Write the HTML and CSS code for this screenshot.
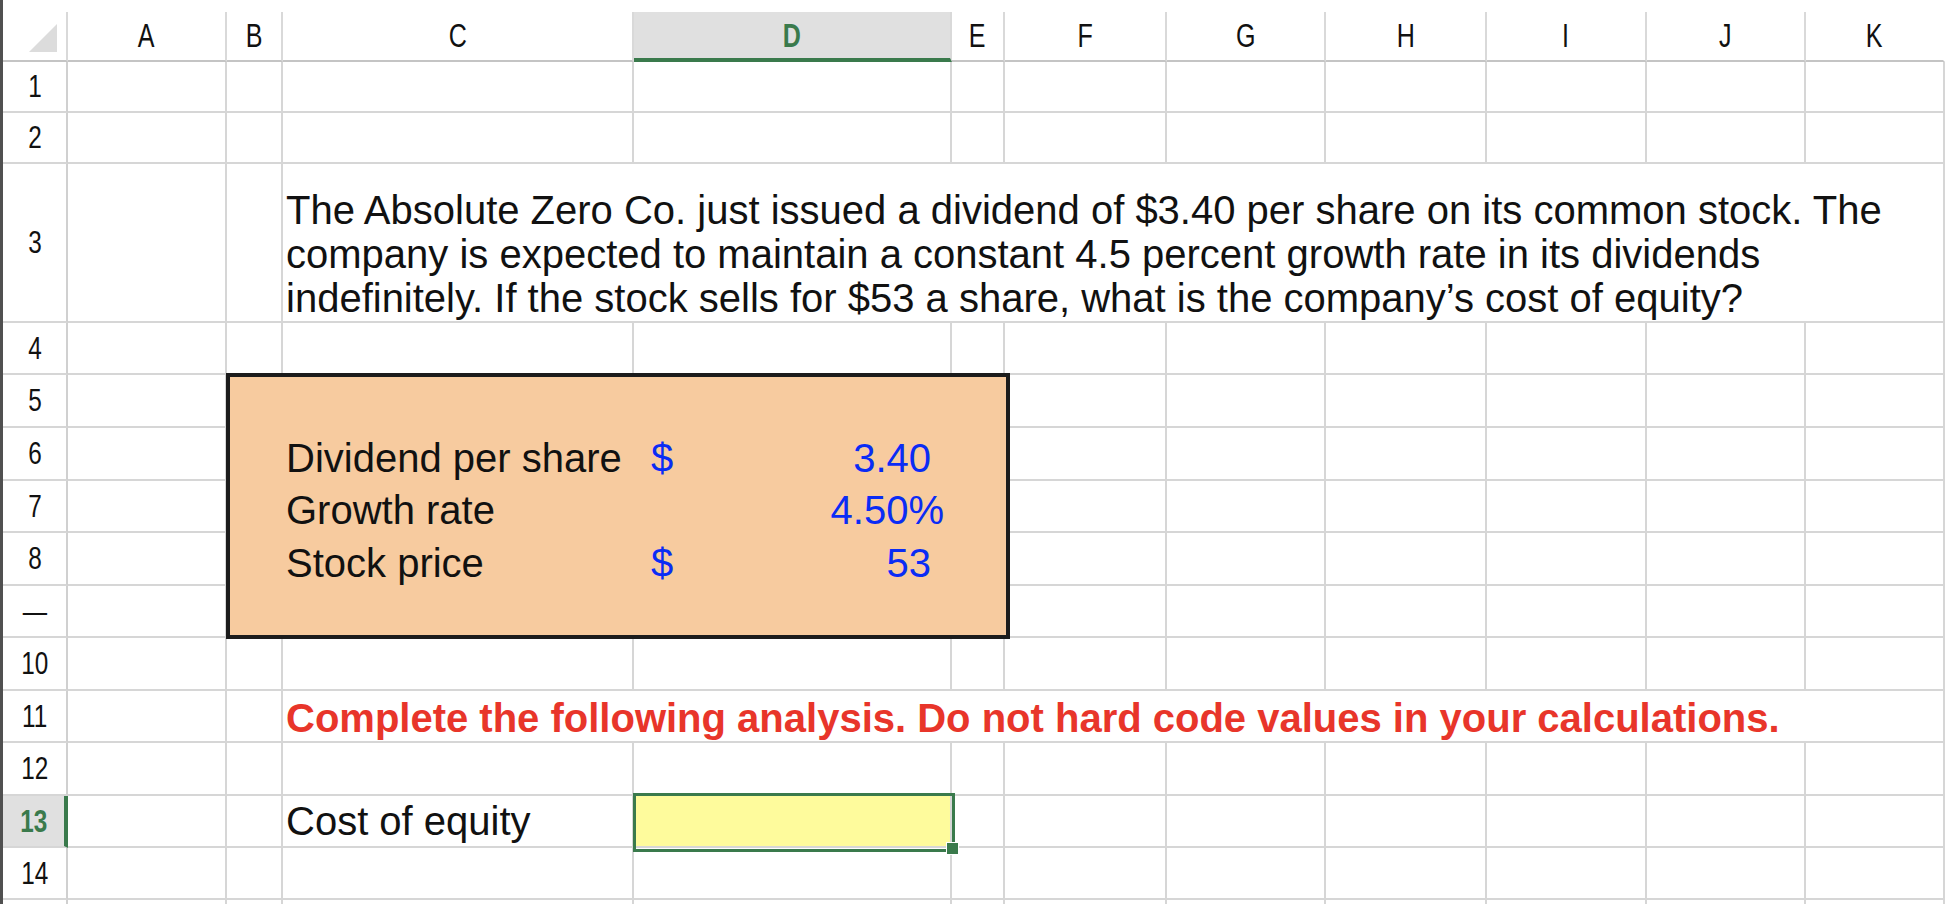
FILE: index.html
```html
<!DOCTYPE html>
<html lang="en">
<head>
<meta charset="utf-8">
<title>Cost of equity</title>
<link rel="stylesheet" href="styles.css">
</head>
<body>
<div class="app">
  <div class="edge"></div>
  <div class="sheet">
    <!-- header row -->
    <div class="h corner"><svg width="28" height="28" viewBox="0 0 28 28"><polygon points="28,0 28,28 0,28" fill="#dcdcdc"/></svg></div>
    <div class="h"><span>A</span></div>
    <div class="h"><span>B</span></div>
    <div class="h"><span>C</span></div>
    <div class="h act"><span>D</span></div>
    <div class="h"><span>E</span></div>
    <div class="h"><span>F</span></div>
    <div class="h"><span>G</span></div>
    <div class="h"><span>H</span></div>
    <div class="h"><span>I</span></div>
    <div class="h"><span>J</span></div>
    <div class="h k"><span>K</span></div>

    <!-- row 1 -->
    <div class="r"><span>1</span></div>
    <div class="c"></div><div class="c"></div><div class="c"></div><div class="c"></div><div class="c"></div><div class="c"></div><div class="c"></div><div class="c"></div><div class="c"></div><div class="c"></div><div class="c"></div>

    <!-- row 2 -->
    <div class="r"><span>2</span></div>
    <div class="c"></div><div class="c"></div><div class="c"></div><div class="c"></div><div class="c"></div><div class="c"></div><div class="c"></div><div class="c"></div><div class="c"></div><div class="c"></div><div class="c"></div>

    <!-- row 3 -->
    <div class="r"><span>3</span></div>
    <div class="c"></div><div class="c"></div>
    <div class="c t wide para">The Absolute Zero Co. just issued a dividend of $3.40 per share on its common stock. The<br>company is expected to maintain a constant 4.5 percent growth rate in its dividends<br>indefinitely. If the stock sells for $53 a share, what is the company’s cost of equity?</div>

    <!-- row 4 -->
    <div class="r"><span>4</span></div>
    <div class="c"></div><div class="c"></div><div class="c"></div><div class="c"></div><div class="c"></div><div class="c"></div><div class="c"></div><div class="c"></div><div class="c"></div><div class="c"></div><div class="c"></div>

    <!-- rows 5-9 (B:E covered by the input box) -->
    <div class="r"><span>5</span></div>
    <div class="c"></div><div class="c"></div><div class="c"></div><div class="c"></div><div class="c"></div><div class="c"></div><div class="c"></div>
    <div class="r"><span>6</span></div>
    <div class="c"></div><div class="c"></div><div class="c"></div><div class="c"></div><div class="c"></div><div class="c"></div><div class="c"></div>
    <div class="r"><span>7</span></div>
    <div class="c"></div><div class="c"></div><div class="c"></div><div class="c"></div><div class="c"></div><div class="c"></div><div class="c"></div>
    <div class="r"><span>8</span></div>
    <div class="c"></div><div class="c"></div><div class="c"></div><div class="c"></div><div class="c"></div><div class="c"></div><div class="c"></div>
    <div class="r"><span>—</span></div>
    <div class="c"></div><div class="c"></div><div class="c"></div><div class="c"></div><div class="c"></div><div class="c"></div><div class="c"></div>

    <!-- row 10 -->
    <div class="r"><span>10</span></div>
    <div class="c"></div><div class="c"></div><div class="c"></div><div class="c"></div><div class="c"></div><div class="c"></div><div class="c"></div><div class="c"></div><div class="c"></div><div class="c"></div><div class="c"></div>

    <!-- row 11 -->
    <div class="r"><span>11</span></div>
    <div class="c"></div><div class="c"></div>
    <div class="c t wide warn">Complete the following analysis. Do not hard code values in your calculations.</div>

    <!-- row 12 -->
    <div class="r"><span>12</span></div>
    <div class="c"></div><div class="c"></div><div class="c"></div><div class="c"></div><div class="c"></div><div class="c"></div><div class="c"></div><div class="c"></div><div class="c"></div><div class="c"></div><div class="c"></div>

    <!-- row 13 -->
    <div class="r act"><span>13</span></div>
    <div class="c"></div><div class="c"></div>
    <div class="c t lbl13">Cost of equity</div>
    <div class="c sel"></div>
    <div class="c"></div><div class="c"></div><div class="c"></div><div class="c"></div><div class="c"></div><div class="c"></div><div class="c"></div>

    <!-- row 14 -->
    <div class="r"><span>14</span></div>
    <div class="c"></div><div class="c"></div><div class="c"></div><div class="c"></div><div class="c"></div><div class="c"></div><div class="c"></div><div class="c"></div><div class="c"></div><div class="c"></div><div class="c"></div>

    <!-- row 15 (cut off) -->
    <div class="r last"></div>
    <div class="c last"></div><div class="c last"></div><div class="c last"></div><div class="c last"></div><div class="c last"></div><div class="c last"></div><div class="c last"></div><div class="c last"></div><div class="c last"></div><div class="c last"></div><div class="c last"></div>

    <!-- input box B5:E9 -->
    <div class="box"></div>
    <div class="t ov lbl r6">Dividend per share</div>
    <div class="t ov val r6"><span>$</span><span>3.40</span></div>
    <div class="t ov lbl r7">Growth rate</div>
    <div class="t ov val pct r7"><span>4.50%</span></div>
    <div class="t ov lbl r8">Stock price</div>
    <div class="t ov val r8"><span>$</span><span>53</span></div>
  </div>
</div>
</body>
</html>
```
FILE: styles.css
```css
html, body {
  margin: 0;
  padding: 0;
  background: #ffffff;
  height: 904px;
  overflow: hidden;
}

.app {
  display: flex;
  height: 904px;
}

.edge {
  flex: none;
  width: 3px;
  background: #505050;
}

.sheet {
  flex: 1;
  padding-top: 12px;
  display: grid;
  grid-template-columns: 65px 159px 56px 351px 318px 53px 162px 159px 161px 160px 159px 139px;
  grid-template-rows: 50px 51px 51px 159px 52px 53px 53px 52px 53px 52px 53px 52px 53px 52px 52px 20px;
  align-content: start;
  font-family: "Liberation Sans", Arial, Helvetica, sans-serif;
  color: #111111;
}

.sheet > div {
  box-sizing: border-box;
  min-width: 0;
}

/* column headers */
.h {
  display: flex;
  align-items: center;
  justify-content: center;
  border-right: 2px solid #d9d9d9;
  border-bottom: 2px solid #c4c4c4;
  font-size: 33px;
  color: #111111;
}

.h span,
.r span {
  display: inline-block;
  transform: scaleX(0.76);
}

.h.corner {
  justify-content: flex-start;
  align-items: flex-start;
  padding: 12px 0 0 26px;
}

.h.corner svg {
  display: block;
}

.h.k {
  border-right-color: transparent;
}

.h.act {
  background: #e0e0e0;
  color: #3a7a4c;
  font-weight: bold;
  border-bottom: 4px solid #3a7a4c;
  padding-top: 2px;
}

/* row headers */
.r {
  display: flex;
  align-items: center;
  justify-content: center;
  border-right: 2px solid #d0d0d0;
  border-bottom: 2px solid #d6d6d6;
  font-size: 32px;
  color: #111111;
}

.r.act {
  background: #e0e0e0;
  color: #3a7a4c;
  font-weight: bold;
  border-right: 4px solid #3a7a4c;
}

/* cells */
.c {
  border-right: 2px solid #d6d6d6;
  border-bottom: 2px solid #d6d6d6;
}

.last {
  border-bottom: none !important;
}

.t {
  display: flex;
  align-items: flex-end;
  padding: 0 0 0 3px;
  font-size: 40px;
  line-height: 45px;
  white-space: nowrap;
  color: #111111;
}

.wide {
  grid-column: span 9;
}

.para {
  display: block;
  padding-top: 24px;
  line-height: 44px;
  background: #ffffff;
}

.warn {
  color: #e8352a;
  font-weight: bold;
}

.lbl13 {
  padding-bottom: 2px;
}

/* selected cell D13 */
.sel {
  position: relative;
  background: #fefb9c;
}

.sel::before {
  content: "";
  position: absolute;
  left: -1px;
  top: -3px;
  right: -5px;
  bottom: -6px;
  border: 3px solid #3a7a4c;
}

.sel::after {
  content: "";
  position: absolute;
  width: 13px;
  height: 13px;
  right: -9px;
  bottom: -9px;
  box-sizing: border-box;
  background: #3a7a4c;
  border: 1px solid #ffffff;
}

/* input box B5:E9 */
.box {
  grid-column: 3 / 7;
  grid-row: 6 / 11;
  margin: -2px -5px -1px -1px;
  background: #f7cb9f;
  border: 4px solid #1c1c1c;
  z-index: 1;
}

.ov {
  z-index: 2;
}

.lbl {
  grid-column: 4;
}

.val {
  grid-column: 5;
  justify-content: space-between;
  padding: 0 21px 0 17px;
  color: #0a2cf5;
}

.val.pct {
  justify-content: flex-end;
  padding-right: 8px;
}

.r6 { grid-row: 7; }
.r7 { grid-row: 8; }
.r8 { grid-row: 9; }
```
